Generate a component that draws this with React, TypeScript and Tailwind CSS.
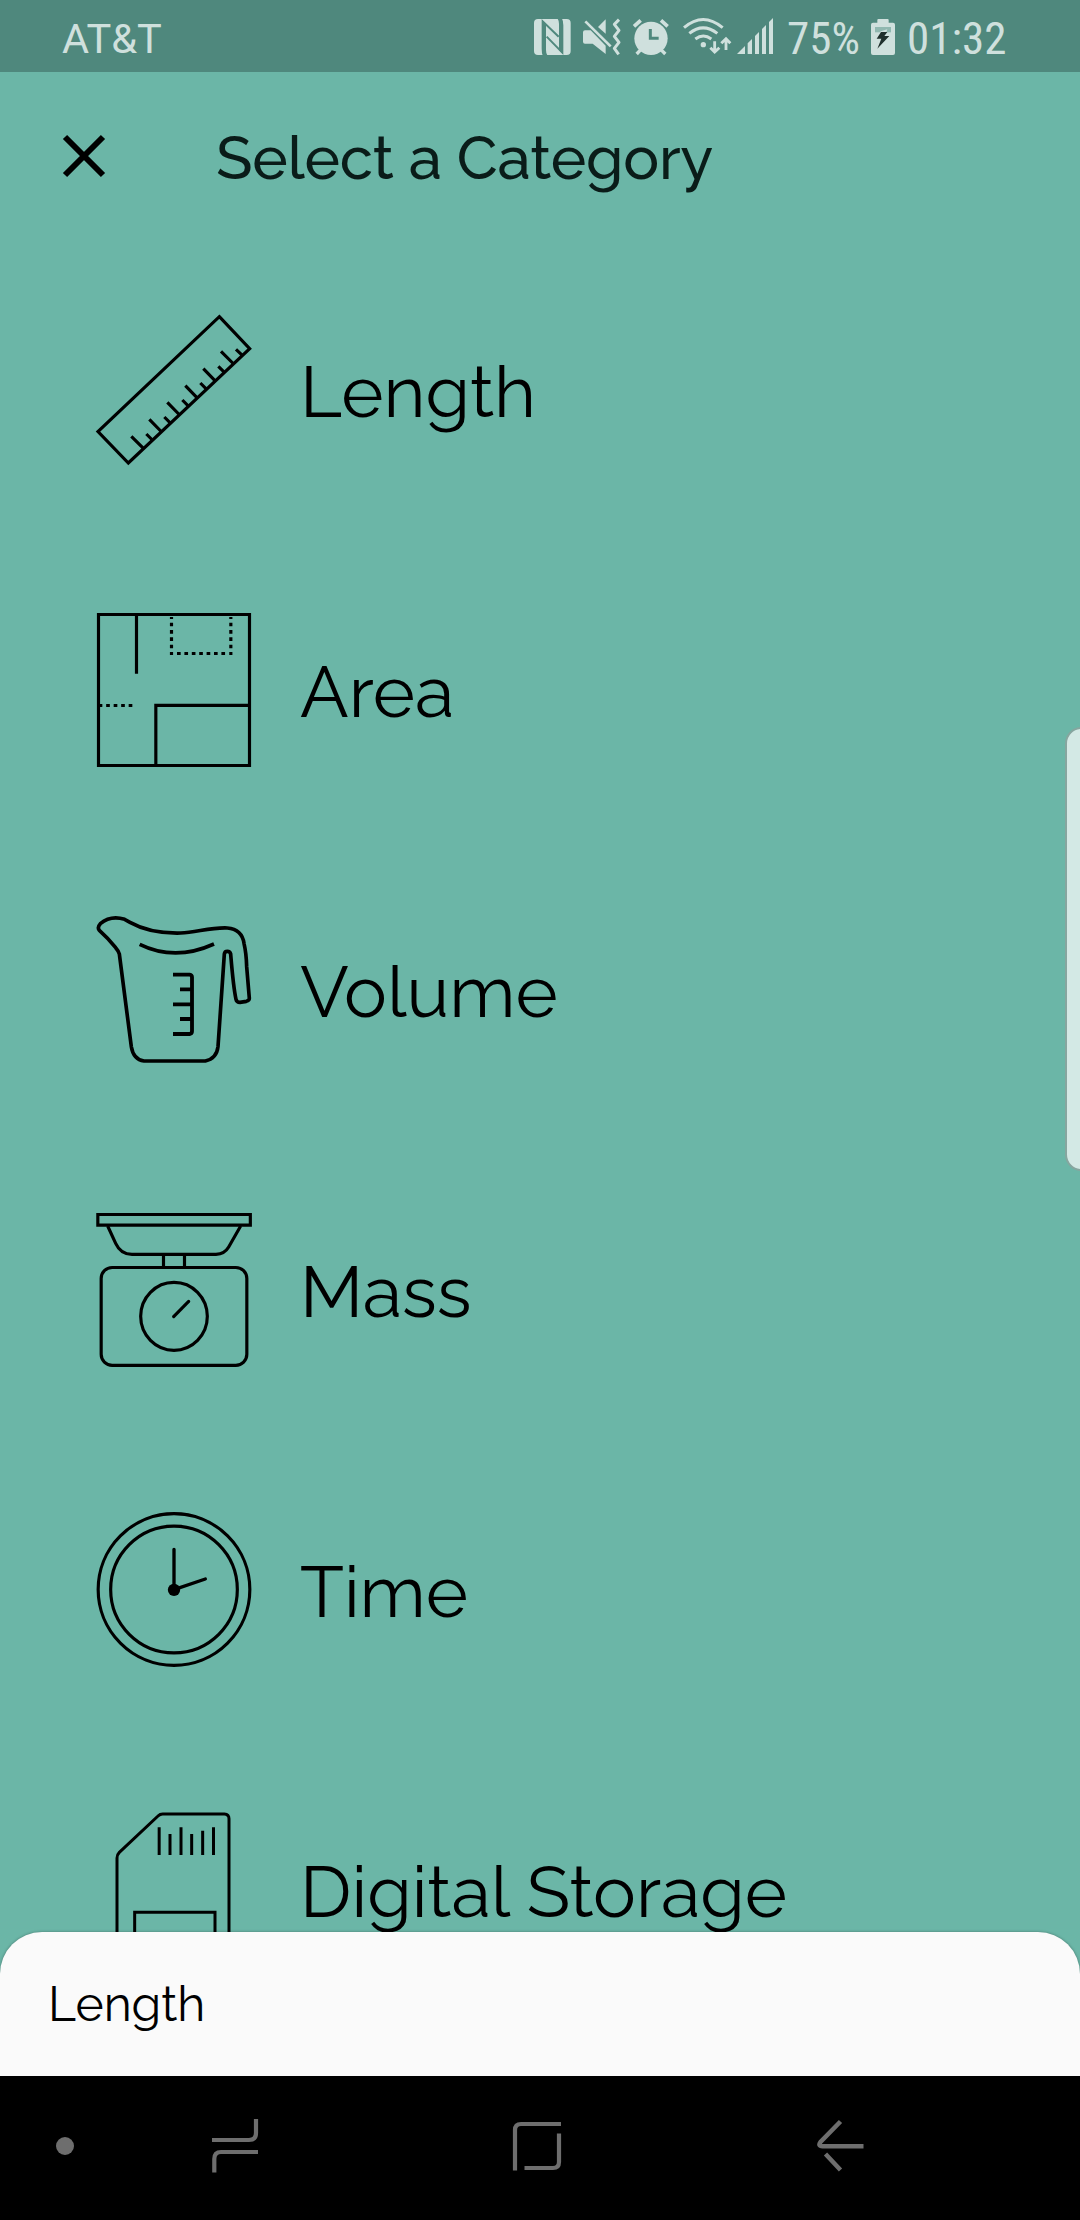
import type { ReactNode } from 'react';

/* Category drawings share a 540x600 canvas shown at 180x200. */
function CategoryIcon({ children, stroke = 9 }: { children: ReactNode; stroke?: number }) {
  return (
    <svg
      className="h-[200px] w-[180px] shrink-0"
      viewBox="0 0 540 600"
      fill="none"
      stroke="#000"
      strokeWidth={stroke}
    >
      {children}
    </svg>
  );
}

const RulerIcon = () => (
  <CategoryIcon stroke={9.5}>
    <path d="M418 80L509 176L145 519L54 425Z" />
    <path d="M154 439L191 476M208 388L245 426M262 337L299 375M316 287L353 325M370 236L407 274M423 184L461 222" />
    <path d="M199 432L217 450M253 381L272 400M307 330L326 349M361 279L380 298M415 229L434 248M468 178L487 196" />
  </CategoryIcon>
);

const FloorPlanIcon = () => (
  <CategoryIcon stroke={9.5}>
    <path d="M55.500 73.500H508.500V526.500H55.500Z" />
    <path d="M169.500 73V251M227.500 526V346H508" />
    <path d="M274.500 81V195M452.500 81V195" strokeDasharray="11 11" strokeDashoffset="5" />
    <path d="M291 190.500H436" strokeDasharray="11 11.200" />
    <path d="M56 346.500H157" strokeDasharray="11 11.500" />
  </CategoryIcon>
);

const JugIcon = () => (
  <CategoryIcon stroke={11}>
    <path d="M58 121Q51 112 61 101Q92 75 134 88L150 97C205 128 260 130 302 129C350 127 390 112 442 114Q486 118 492 160Q499 190 500 230L508 325Q508 332 499 334L480 337Q470 337 468 328C460 290 456 240 452 192Q450 184 442 184Q434 184 433 192L414 470Q410 506 376 513H192Q160 508 154 470L118 192Q115 182 107 173Q85 145 58 121Z" />
    <path d="M179 163Q285 215 402 162" />
    <path d="M279 254H329Q336 255 336 262V424Q336 431 329 432H279M300 298H336M279 343H336M300 387H336" strokeWidth="11.500" />
  </CategoryIcon>
);

const ScaleIcon = () => (
  <CategoryIcon stroke={9.5}>
    <path d="M53.500 73.500H511V105.500H53.500Z" />
    <path d="M83 108L107 160Q122 193 156 193H408Q434 192 446 171L482 108" />
    <path d="M250.500 195V230M313.500 195V230" />
    <rect x="63.500" y="232.500" width="437" height="293.500" rx="33" />
    <ellipse cx="282" cy="379" rx="100" ry="102" />
    <path d="M281 380L326 334" strokeLinecap="round" />
  </CategoryIcon>
);

const ClockIcon = () => (
  <CategoryIcon stroke={9.5}>
    <circle cx="282" cy="298.500" r="227.500" />
    <circle cx="282" cy="298.500" r="190" />
    <circle cx="282" cy="299.500" r="18.500" fill="#000" stroke="none" />
    <path d="M282 299V178M282 299L376 267" strokeWidth="10" strokeLinecap="round" />
  </CategoryIcon>
);

const CardIcon = () => (
  <CategoryIcon stroke={9}>
    <path d="M248 72H433Q447 73 447 86V528H111V204Q111 194 118 187L234 78Q240 72 248 72Z" />
    <path d="M237.500 112V195M270 132V195M303 112V195M335 132V195M368 122V195M400.500 112V195" />
    <path d="M164 528V367H405V528" />
  </CategoryIcon>
);

const categories = [
  { name: 'Length', Icon: RulerIcon },
  { name: 'Area', Icon: FloorPlanIcon },
  { name: 'Volume', Icon: JugIcon },
  { name: 'Mass', Icon: ScaleIcon },
  { name: 'Time', Icon: ClockIcon },
  { name: 'Digital Storage', Icon: CardIcon },
];

function StatusIcons() {
  return (
    <div className="flex h-[72px]" aria-hidden="true">
      {/* NFC */}
      <svg className="h-[72px] w-[45px]" viewBox="36 0 135 216" fill="none">
        <rect x="42" y="57" width="110" height="108" rx="12" fill="#cfe0dd" />
        <path
          d="M71 166Q68 158 68 146V64L116 110M123 56Q127 64 127 76V158L80 110"
          stroke="#4f887d"
          strokeWidth="6"
        />
        <path d="M66 60L78 71V150Q78 160 82 166H73Q66 160 66 146ZM129 162L117 151V72Q117 62 113 56H122Q129 62 129 76Z" fill="#4f887d" />
      </svg>
      {/* Muted speaker with vibration */}
      <svg className="h-[72px] w-[50px]" viewBox="171 0 150 216" fill="none">
        <path d="M189 97Q189 91 195 91H212L257 137V162L218 131H195Q189 131 189 125Z" fill="#cfe0dd" />
        <path d="M234 81L257 58V101Z" fill="#cfe0dd" />
        <path d="M196 64L272 139" stroke="#cfe0dd" strokeWidth="8" />
        <path d="M297 59L283 73L297 91L283 109L297 127L283 145L296 163" stroke="#cfe0dd" strokeWidth="9" strokeLinejoin="round" />
      </svg>
      {/* Alarm */}
      <svg className="h-[72px] w-[50px]" viewBox="321 0 150 216" fill="none" stroke="#cfe0dd">
        <circle cx="393" cy="115" r="50" fill="#cfe0dd" stroke="none" />
        <path d="M342 79L362 61M423 61L443 79" strokeWidth="11" />
        <path d="M363 148L350 162M422 148L436 162" strokeWidth="10" />
        <path d="M391 87V115H416" stroke="#4f887d" strokeWidth="9" />
      </svg>
      {/* Wi-Fi with traffic arrows */}
      <svg className="h-[72px] w-[57px]" viewBox="471 0 171 216" fill="none" stroke="#cfe0dd" strokeWidth="9">
        <path d="M492 83Q549 34 608 83M508 100Q549 67 592 100M526 117Q550 99 574 117" />
        <circle cx="550" cy="134" r="8" fill="#cfe0dd" stroke="none" />
        <path d="M584 124V154M571 143L584 156L598 143M618 150V119M604 130L618 116L631 130" strokeWidth="8.500" />
      </svg>
      {/* Signal */}
      <svg className="h-[72px] w-[42px]" viewBox="642 0 126 216" fill="#cfe0dd">
        <path d="M651 162L675 138V162ZM683 162V130L696 117V162ZM705 162V108L717 96V162ZM726 162V87L738 75V162ZM747 162V66L759 54V162Z" />
      </svg>
    </div>
  );
}

function BatteryIcon() {
  return (
    <svg className="h-[72px] w-6" viewBox="273 0 72 216" aria-hidden="true">
      <path d="M279 68H292V60Q292 57 295 57H323Q326 57 326 60V68H339Q345 68 345 74V159Q345 165 339 165H279Q273 165 273 159V74Q273 68 279 68Z" fill="#cfe0dd" />
      <path d="M285 81H333V97H285Z" fill="#90b8b0" />
      <path d="M302 94L322 88L315 107H329L291 148L303 117H288Z" fill="#cfe0dd" />
      <path d="M303 96H322L313 108H328L292 146L304 116H290Z" fill="#20302d" />
    </svg>
  );
}

function NavBar() {
  return (
    <nav className="flex h-36 shrink-0 items-center bg-black pb-1 pl-14">
      <span className="size-[18px] rounded-full bg-[#6e6e6e]" />
      <svg className="ml-[134px] h-[60px] w-[54px]" viewBox="208 2116 54 60" fill="none" stroke="#6e6e6e" strokeWidth="4.200">
        <path d="M256 2119V2133Q256 2140 249 2140H212M258 2152H221Q214.300 2152 214.300 2159V2172.500" />
      </svg>
      <svg className="ml-[246px] h-[60px] w-[58px]" viewBox="508 2116 58 60" fill="none" stroke="#6e6e6e" strokeWidth="4.200">
        <path d="M515 2170.500V2130Q515 2124 521 2124H561M559 2133.500V2162Q559 2168 553 2168H524.500" />
      </svg>
      <svg className="ml-[247px] h-[60px] w-[58px]" viewBox="813 2116 58 60" fill="none" stroke="#6e6e6e" strokeWidth="4.500">
        <path d="M840.500 2121.500L820.500 2142Q817.500 2146.200 822.500 2146.200H863.500M825.500 2154L840.500 2170" />
      </svg>
    </nav>
  );
}

export default function App() {
  return (
    <div className="flex h-[2220px] w-[1080px] flex-col overflow-hidden bg-[#6bb6a7] font-['Raleway','Lato',sans-serif] text-black relative">
      <header className="flex h-[72px] shrink-0 items-center bg-[#4f887d] text-[#cfe0dd]">
        <span className="ml-[62px] flex-1 pt-1.5 font-['Roboto',sans-serif] text-[41.5px] leading-none">AT&amp;T</span>
        <StatusIcons />
        <div className="flex w-[304px] items-center pl-[11px] font-['Roboto_Condensed','Roboto',sans-serif] text-[45px] leading-none">
          <span className="w-[84px] pt-[5px]">75%</span>
          <BatteryIcon />
          <span className="ml-3 pt-[5px]">01:32</span>
        </div>
      </header>

      <div className="flex h-[168px] shrink-0 items-center pl-[60px]">
        <svg className="size-12" viewBox="60 132 48 48" fill="none" stroke="#000" strokeWidth="6" aria-label="Close">
          <path d="M65 137L103 175M103 137L65 175" />
        </svg>
        <h1 className="ml-[108px] pt-1 text-[60px] leading-none font-medium tracking-[-0.2px] text-[#0a1c19]">
          Select a Category
        </h1>
      </div>

      <main className="min-h-0 flex-1 overflow-hidden">
        {categories.map(({ name, Icon }) => (
          <div key={name} className="flex h-[300px] items-center pl-20">
            <Icon />
            <span className="ml-10 pt-[3px] text-[72px] leading-none whitespace-nowrap">{name}</span>
          </div>
        ))}
      </main>

      <div className="flex h-36 shrink-0 items-center rounded-t-[42px] bg-[#fafafa] pl-12 text-[48px] leading-none shadow-[0_0_3px_rgba(0,0,0,0.35)]">
        Length
      </div>
      <NavBar />

      {/* Edge panel handle */}
      <div className="absolute top-[727px] right-[-18px] h-[444px] w-[33px] rounded-[18px] border-2 border-[#86a69f] bg-[#d3e9e5]" />
    </div>
  );
}
